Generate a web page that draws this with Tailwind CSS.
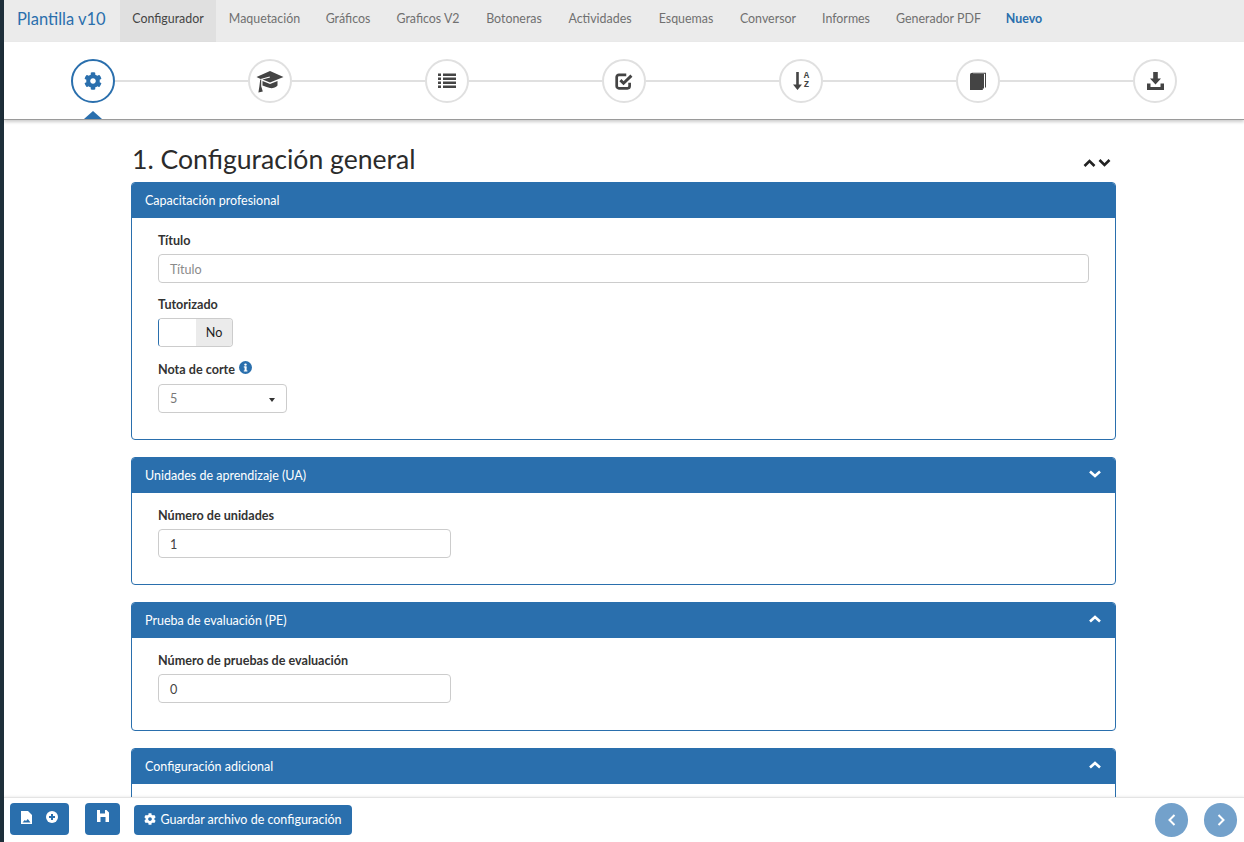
<!DOCTYPE html>
<html lang="es">
<head>
	<title>Plantilla v10</title>
	<meta name="viewport" content="width=device-width, initial-scale=1">
	<script src="https://cdn.jsdelivr.net/npm/@tailwindcss/browser@4"></script>
</head>
<body>

	<div class="font-['Lato',sans-serif] flex h-[842px] w-[1244px] overflow-hidden bg-white text-[#333]">
		<!-- window edge -->
		<div class="w-1 flex-none bg-[#1e2f3a]"></div>

		<div class="flex min-w-0 flex-1 flex-col">
			<!-- top nav -->
			<nav class="flex h-[42px] flex-none items-stretch bg-[#ebebeb] text-[12.4px] text-[#707070]">
				<a class="flex w-[116px] flex-none items-center pb-1 pl-[13px] text-[16.5px] text-[#2a6fad]">Plantilla v10</a>
				<a class="flex w-[96px] flex-none items-center justify-center bg-[#e0e0e0] pb-1 text-[#444]">Configurador</a>
				<a class="flex w-[97px] flex-none items-center justify-center pb-1">Maquetación</a>
				<a class="flex w-[70px] flex-none items-center justify-center pb-1">Gráficos</a>
				<a class="flex w-[90px] flex-none items-center justify-center pb-1">Graficos V2</a>
				<a class="flex w-[82px] flex-none items-center justify-center pb-1">Botoneras</a>
				<a class="flex w-[90px] flex-none items-center justify-center pb-1">Actividades</a>
				<a class="flex w-[82px] flex-none items-center justify-center pb-1">Esquemas</a>
				<a class="flex w-[82px] flex-none items-center justify-center pb-1">Conversor</a>
				<a class="flex w-[74px] flex-none items-center justify-center pb-1">Informes</a>
				<a class="flex w-[111px] flex-none items-center justify-center pb-1">Generador PDF</a>
				<a class="flex w-[60px] flex-none items-center justify-center pb-1 font-bold text-[#2a6fad]">Nuevo</a>
			</nav>

			<!-- stepper -->
			<div class="relative z-10 flex h-[78px] flex-none items-start border-b border-[#9a9a9a] px-[67px] pt-[17px] shadow-[0_2px_3px_rgba(0,0,0,0.2)]">
				<div class="flex h-11 w-11 flex-none items-center justify-center rounded-full border-2 border-[#2a6fad] text-[#2a6fad]">
					<svg class="h-[18px] w-[18px]" viewBox="0 0 512 512" fill="currentColor"><path d="M487.4 315.7l-42.6-24.6c4.3-23.2 4.3-47 0-70.2l42.6-24.6c4.9-2.8 7.1-8.6 5.5-14-11.1-35.6-30-67.8-54.7-94.6-3.8-4.1-10-5.1-14.8-2.3L380.8 110c-17.9-15.4-38.5-27.3-60.8-35.1V25.8c0-5.6-3.9-10.5-9.4-11.7-36.7-8.2-74.3-7.8-109.2 0-5.5 1.2-9.4 6.1-9.4 11.7V75c-22.2 7.9-42.8 19.8-60.8 35.1L88.7 85.5c-4.9-2.8-11-1.9-14.8 2.3-24.7 26.7-43.6 58.9-54.7 94.6-1.7 5.4.6 11.2 5.5 14L67.3 221c-4.3 23.2-4.3 47 0 70.2l-42.6 24.6c-4.9 2.8-7.1 8.6-5.5 14 11.1 35.6 30 67.8 54.7 94.6 3.8 4.1 10 5.1 14.8 2.3l42.6-24.6c17.9 15.4 38.5 27.3 60.8 35.1v49.2c0 5.6 3.9 10.5 9.4 11.7 36.7 8.2 74.3 7.8 109.2 0 5.5-1.2 9.4-6.1 9.4-11.7v-49.2c22.2-7.9 42.8-19.8 60.8-35.1l42.6 24.6c4.9 2.8 11 1.9 14.8-2.3 24.7-26.7 43.6-58.9 54.7-94.6 1.5-5.5-.7-11.3-5.6-14.1zM256 336c-44.1 0-80-35.9-80-80s35.9-80 80-80 80 35.9 80 80-35.9 80-80 80z"/></svg>
				</div>
				<div class="mt-[21px] h-0.5 flex-1 bg-[#e0e0e0]"></div>
				<div class="flex h-11 w-11 flex-none items-center justify-center rounded-full border-2 border-[#e0e0e0] text-[#444]">
					<svg class="h-[24px] w-[28px]" viewBox="0 0 28 24" fill="currentColor"><path d="M14 2 27.5 8 14 13.5 6.5 10.5 14 8.5 13.6 7.6 4.6 10 .5 8Z"/><path d="M6.5 12 14 15 21.5 12V16.5C19.5 18.6 16.5 19.5 14 19 11.5 18.5 9.5 17.8 8 17L6.5 16.5Z"/><path d="M4.2 10.8 5.2 10.4V17.2L6.8 22.6 2.4 23.6 3.4 17.2Z"/></svg>
				</div>
				<div class="mt-[21px] h-0.5 flex-1 bg-[#e0e0e0]"></div>
				<div class="flex h-11 w-11 flex-none items-center justify-center rounded-full border-2 border-[#e0e0e0] text-[#444]">
					<svg class="h-4 w-[18px]" viewBox="0 0 18 16" fill="currentColor"><rect x="0" y="0.5" width="3" height="2.5"/><rect x="5" y="0.5" width="13" height="2.5"/><rect x="0" y="4.5" width="3" height="2.5"/><rect x="5" y="4.5" width="13" height="2.5"/><rect x="0" y="8.5" width="3" height="2.5"/><rect x="5" y="8.5" width="13" height="2.5"/><rect x="0" y="12.5" width="3" height="2.5"/><rect x="5" y="12.5" width="13" height="2.5"/></svg>
				</div>
				<div class="mt-[21px] h-0.5 flex-1 bg-[#e0e0e0]"></div>
				<div class="flex h-11 w-11 flex-none items-center justify-center rounded-full border-2 border-[#e0e0e0] text-[#444]">
					<svg class="h-[18px] w-[18px]" viewBox="0 0 16 16" fill="none" stroke="currentColor"><path stroke-width="2.4" d="M13 9.5V12.5C13 13.6 12.1 14.5 11 14.5H3.5C2.4 14.5 1.5 13.6 1.5 12.5V4.5C1.5 3.4 2.4 2.5 3.5 2.5H10"/><path stroke-width="2.6" d="M4.8 7.2 7.6 10 14.6 3.2"/></svg>
				</div>
				<div class="mt-[21px] h-0.5 flex-1 bg-[#e0e0e0]"></div>
				<div class="flex h-11 w-11 flex-none items-center justify-center gap-[2px] rounded-full border-2 border-[#e0e0e0] text-[#444]">
					<svg class="h-[18px] w-[9px]" viewBox="0 0 9 18" fill="currentColor"><path d="M3.2 0H5.8V12.5H9L4.5 18 0 12.5H3.2Z"/></svg>
					<div class="flex flex-col font-['Liberation_Mono',monospace] text-[9px] leading-[9px] font-bold">
						<span>A</span>
						<span>Z</span>
					</div>
				</div>
				<div class="mt-[21px] h-0.5 flex-1 bg-[#e0e0e0]"></div>
				<div class="flex h-11 w-11 flex-none items-center justify-center rounded-full border-2 border-[#e0e0e0] text-[#444]">
					<svg class="h-[18px] w-4" viewBox="0 0 16 18" fill="currentColor"><path d="M0 3C0 1.5 1 .7 2.5 .7H16V15.5H15V1.7H3V2H14V16.5H12.8V18H0Z"/></svg>
				</div>
				<div class="mt-[21px] h-0.5 flex-1 bg-[#e0e0e0]"></div>
				<div class="flex h-11 w-11 flex-none items-center justify-center rounded-full border-2 border-[#e0e0e0] text-[#444]">
					<svg class="h-[18px] w-[17px]" viewBox="0 0 17 18" fill="currentColor"><path d="M6.2 0H10.8V6.5H14L8.5 12.5 3 6.5H6.2Z"/><path d="M0 11.5H3.5V15H13.5V11.5H17V18H0Z"/></svg>
				</div>
				<!-- active step marker -->
				<div class="absolute bottom-0 left-[80px] h-0 w-0 border-x-[9px] border-b-[8px] border-x-transparent border-b-[#2a6fad]"></div>
			</div>

			<!-- content -->
			<main class="min-h-0 flex-1 overflow-hidden pr-[128px] pl-[127px]">
				<div class="mt-[20px] mb-[3px] flex h-[39px] items-center justify-between">
					<h1 class="pl-[1px] text-[26.6px] leading-[39px] text-[#2b2b2b]">1. Configuración general</h1>
					<div class="mt-[6px] mr-[5px] flex gap-[2px] text-[#222]">
						<svg class="h-2 w-[13px]" viewBox="0 0 13 8" fill="none" stroke="currentColor" stroke-width="2.6"><path d="M1.5 7 6.5 2 11.5 7"/></svg>
						<svg class="h-2 w-[13px]" viewBox="0 0 13 8" fill="none" stroke="currentColor" stroke-width="2.6"><path d="M1.5 1 6.5 6 11.5 1"/></svg>
					</div>
				</div>

				<!-- capacitacion -->
				<section class="mb-[17px] overflow-hidden rounded-[4px] border border-[#2a6fad]">
					<div class="flex h-[35px] items-center bg-[#2a6fad] px-[13px] pt-[2px] text-[12.5px] text-white">Capacitación profesional</div>
					<div class="px-[26px] pt-[13px] pb-[26px] text-[12.6px]">
						<label class="mb-[5px] block h-[18px] leading-[20px] font-bold">Título</label>
						<div class="mb-3 flex h-[29px] items-center rounded-[4px] border border-[#ccc] px-[11px] pt-[3px] text-[#8a8a8a]">Título</div>
						<label class="mb-[5px] block h-[18px] leading-[20px] font-bold">Tutorizado</label>
						<div class="mb-[13px] flex h-[29px] w-[75px] overflow-hidden rounded-[4px] border border-[#ccc] border-l-[#2a6fad]">
							<div class="w-[37px] bg-white"></div>
							<div class="flex flex-1 items-center justify-center bg-[#ebebeb] pt-[2px] text-[#222]">No</div>
						</div>
						<label class="mb-[6px] flex h-[18px] items-center gap-[4px] pt-[2px] font-bold">
							Nota de corte
							<svg class="mb-[5px] h-[13px] w-[13px]" viewBox="0 0 13 13"><circle cx="6.5" cy="6.5" r="6.5" fill="#2a6fad"/><rect x="5.6" y="5.6" width="2" height="4.4" fill="#fff"/><rect x="4.8" y="5.4" width="2.6" height="1.1" fill="#fff"/><rect x="4.8" y="9.4" width="3.6" height="1.1" fill="#fff"/><circle cx="6.5" cy="3.6" r="1.2" fill="#fff"/></svg>
						</label>
						<div class="flex h-[29px] w-[129px] items-center justify-between rounded-[4px] border border-[#ccc] pt-[2px] pr-[11px] pl-[11px] text-[#777]">
							5
							<div class="h-0 w-0 border-x-[3.5px] border-t-[4px] border-x-transparent border-t-[#333]"></div>
						</div>
					</div>
				</section>

				<!-- unidades -->
				<section class="mb-[17px] overflow-hidden rounded-[4px] border border-[#2a6fad]">
					<div class="flex h-[35px] items-center justify-between bg-[#2a6fad] pt-[2px] pr-[14px] pl-[13px] text-[12.5px] text-white">
						Unidades de aprendizaje (UA)
						<svg class="mb-[6px] h-2 w-[12px]" viewBox="0 0 12 8" fill="none" stroke="currentColor" stroke-width="2.6"><path d="M1 1.5 6 6 11 1.5"/></svg>
					</div>
					<div class="px-[26px] pt-[13px] pb-[26px] text-[12.6px]">
						<label class="mb-[5px] block h-[18px] leading-[20px] font-bold">Número de unidades</label>
						<div class="flex h-[29px] w-[293px] items-center rounded-[4px] border border-[#ccc] px-[11px] pt-[3px] text-[#444]">1</div>
					</div>
				</section>

				<!-- pruebas -->
				<section class="mb-[17px] overflow-hidden rounded-[4px] border border-[#2a6fad]">
					<div class="flex h-[35px] items-center justify-between bg-[#2a6fad] pt-[1px] pr-[14px] pl-[13px] text-[12.5px] text-white">
						Prueba de evaluación (PE)
						<svg class="mb-[4px] h-2 w-[12px]" viewBox="0 0 12 8" fill="none" stroke="currentColor" stroke-width="2.6"><path d="M1 6.5 6 2 11 6.5"/></svg>
					</div>
					<div class="px-[26px] pt-[13px] pb-[27px] text-[12.6px]">
						<label class="mb-[5px] block h-[18px] leading-[20px] font-bold">Número de pruebas de evaluación</label>
						<div class="flex h-[29px] w-[293px] items-center rounded-[4px] border border-[#ccc] px-[11px] pt-[3px] text-[#444]">0</div>
					</div>
				</section>

				<!-- adicional -->
				<section class="h-[120px] overflow-hidden rounded-[4px] border border-[#2a6fad]">
					<div class="flex h-[35px] items-center justify-between bg-[#2a6fad] pt-[2px] pr-[14px] pl-[13px] text-[12.5px] text-white">
						Configuración adicional
						<svg class="mb-[6px] h-2 w-[12px]" viewBox="0 0 12 8" fill="none" stroke="currentColor" stroke-width="2.6"><path d="M1 6.5 6 2 11 6.5"/></svg>
					</div>
				</section>
			</main>

			<!-- footer -->
			<footer class="relative z-10 flex h-[45px] flex-none items-start justify-between border-t border-[#e4e4e4] bg-white pt-[5px] pr-[7px] pl-[6px] shadow-[0_-1px_2px_rgba(0,0,0,0.06)]">
				<div class="flex items-start">
					<button class="flex h-8 w-[59px] items-start justify-center gap-[14px] rounded-[4px] bg-[#2a6fad] pt-[8px] text-white">
						<svg class="h-[13px] w-[11px]" viewBox="0 0 11 13" fill="currentColor"><path fill-rule="evenodd" d="M0 0H7L11 4V13H0ZM1.5 11.5H9.5L6.8 8 5 10 3.8 9Z"/></svg>
						<svg class="h-3 w-3" viewBox="0 0 12 12"><circle cx="6" cy="6" r="6" fill="#fff"/><path d="M6 3V9M3 6H9" stroke="#2a6fad" stroke-width="2"/></svg>
					</button>
					<button class="ml-4 flex h-8 w-[35px] items-start justify-center rounded-[4px] bg-[#2a6fad] pt-[7px] text-white">
						<svg class="h-3 w-3" viewBox="0 0 12 12" fill="currentColor"><path fill-rule="evenodd" d="M0 0H9.5L12 2.5V12H0ZM3 0V3.5H8V0ZM3.5 7V12H8.5V7Z"/></svg>
					</button>
					<button class="ml-[14px] mt-[2px] flex h-[30px] w-[218px] items-center justify-center gap-[4px] rounded-[4px] bg-[#2a6fad] text-[12.5px] text-white">
						<svg class="mb-[2px] h-3 w-3" viewBox="0 0 512 512" fill="currentColor"><path d="M487.4 315.7l-42.6-24.6c4.3-23.2 4.3-47 0-70.2l42.6-24.6c4.9-2.8 7.1-8.6 5.5-14-11.1-35.6-30-67.8-54.7-94.6-3.8-4.1-10-5.1-14.8-2.3L380.8 110c-17.9-15.4-38.5-27.3-60.8-35.1V25.8c0-5.6-3.9-10.5-9.4-11.7-36.7-8.2-74.3-7.8-109.2 0-5.5 1.2-9.4 6.1-9.4 11.7V75c-22.2 7.9-42.8 19.8-60.8 35.1L88.7 85.5c-4.9-2.8-11-1.9-14.8 2.3-24.7 26.7-43.6 58.9-54.7 94.6-1.7 5.4.6 11.2 5.5 14L67.3 221c-4.3 23.2-4.3 47 0 70.2l-42.6 24.6c-4.9 2.8-7.1 8.6-5.5 14 11.1 35.6 30 67.8 54.7 94.6 3.8 4.1 10 5.1 14.8 2.3l42.6-24.6c17.9 15.4 38.5 27.3 60.8 35.1v49.2c0 5.6 3.9 10.5 9.4 11.7 36.7 8.2 74.3 7.8 109.2 0 5.5-1.2 9.4-6.1 9.4-11.7v-49.2c22.2-7.9 42.8-19.8 60.8-35.1l42.6 24.6c4.9 2.8 11 1.9 14.8-2.3 24.7-26.7 43.6-58.9 54.7-94.6 1.5-5.5-.7-11.3-5.6-14.1zM256 336c-44.1 0-80-35.9-80-80s35.9-80 80-80 80 35.9 80 80-35.9 80-80 80z"/></svg>
						Guardar archivo de configuración
					</button>
				</div>
				<div class="flex gap-4">
					<button class="flex h-[34px] w-[33px] items-center justify-center rounded-full bg-[#73a1cb] text-white">
						<svg class="h-3 w-2" viewBox="0 0 8 12" fill="none" stroke="currentColor" stroke-width="2"><path d="M6.5 1 1.5 6 6.5 11"/></svg>
					</button>
					<button class="flex h-[34px] w-[33px] items-center justify-center rounded-full bg-[#73a1cb] text-white">
						<svg class="h-3 w-2" viewBox="0 0 8 12" fill="none" stroke="currentColor" stroke-width="2"><path d="M1.5 1 6.5 6 1.5 11"/></svg>
					</button>
				</div>
			</footer>
		</div>
	</div>

</body>
</html>
